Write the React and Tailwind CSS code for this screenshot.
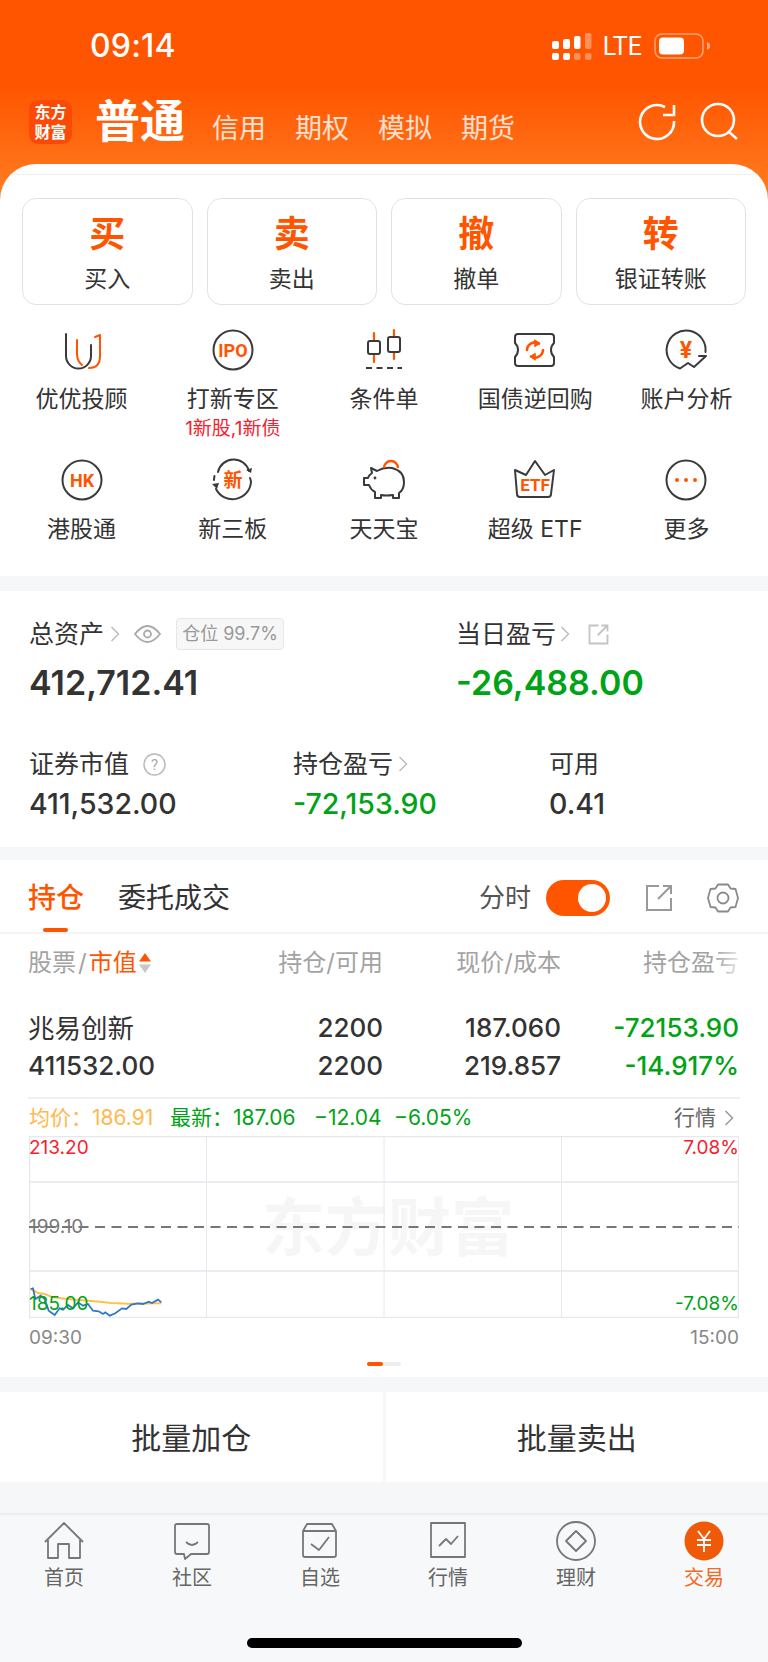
import React from 'react';

const ORANGE = '#ff5500';
const DARK = '#3a3a3a';

const trades = [
    { big: '买', small: '买入' },
    { big: '卖', small: '卖出' },
    { big: '撤', small: '撤单' },
    { big: '转', small: '银证转账' },
];

const IconBox = ({ children }) => (
    <svg width="44" height="44" viewBox="0 0 44 44" fill="none" strokeLinecap="round" strokeLinejoin="round">
        {children}
    </svg>
);

const OrangeText = ({ size = 16, y = 28, children }) => (
    <text x="22" y={y} textAnchor="middle" fill={ORANGE} fontSize={size} fontWeight="700" fontFamily="Roboto, 'Noto Sans CJK SC', sans-serif">
        {children}
    </text>
);

const menuIcons = {
    youyou: (
        <IconBox>
            <path d="M6 6V28a12.5 12.5 0 0 0 25 0V17" stroke={DARK} strokeWidth="2" />
            <path d="M17 12V26Q17 33 22 37" stroke={ORANGE} strokeWidth="2" />
            <path d="M29 40Q40 40 40 28V7L35 9" stroke={ORANGE} strokeWidth="2" />
        </IconBox>
    ),
    ipo: (
        <IconBox>
            <circle cx="22" cy="22" r="19.5" stroke={DARK} strokeWidth="2" />
            <OrangeText size={18} y={28.5}>IPO</OrangeText>
        </IconBox>
    ),
    candle: (
        <IconBox>
            <path d="M12 5V34M32 2V31" stroke={ORANGE} strokeWidth="2.2" />
            <rect x="6" y="13" width="12" height="13" rx="2" fill="#fff" stroke={DARK} strokeWidth="2" />
            <rect x="26" y="9" width="12" height="15" rx="2" fill="#fff" stroke={DARK} strokeWidth="2" />
            <path d="M4 40H40" stroke={DARK} strokeWidth="2" strokeDasharray="6 4.5" strokeLinecap="butt" />
        </IconBox>
    ),
    ticket: (
        <IconBox>
            <path d="M5 6H38Q41 6 41 9V15Q38 18 38 22Q38 26 41 29V35Q41 38 38 38H5Q2 38 2 35V29Q5 26 5 22Q5 18 2 15V9Q2 6 5 6Z" stroke={DARK} strokeWidth="2" />
            <path d="M14 22A8 8 0 0 1 26 15.500" stroke={ORANGE} strokeWidth="2.600" />
            <path d="M30 22A8 8 0 0 1 18 28.500" stroke={ORANGE} strokeWidth="2.600" />
            <path d="M22 12L27 15.500L22 18.500Z" fill={ORANGE} stroke={ORANGE} />
            <path d="M22 25.500L17 28.500L22 32Z" fill={ORANGE} stroke={ORANGE} />
        </IconBox>
    ),
    analysis: (
        <IconBox>
            <path d="M41.500 24A19.500 19.500 0 1 0 16 40.500L24 35L30 39L42 28H35" stroke={DARK} strokeWidth="2" />
            <OrangeText size={23} y={30}>¥</OrangeText>
        </IconBox>
    ),
    hk: (
        <IconBox>
            <circle cx="22" cy="22" r="19.500" stroke={DARK} strokeWidth="2" />
            <OrangeText size={18} y={28.500}>HK</OrangeText>
        </IconBox>
    ),
    xin: (
        <IconBox>
            <path d="M7 17A16 16 0 0 1 38 16" stroke={DARK} strokeWidth="2" transform="translate(0 -3)" />
            <path d="M39 20A18.500 18.500 0 0 1 40 24A18.500 18.500 0 0 1 5 31" stroke={DARK} strokeWidth="2" />
            <path d="M3 22A19 19 0 0 1 3.500 18" stroke={DARK} strokeWidth="2" />
            <path d="M35 12L40 15L41 10ZM1 26L6 31L8 25Z" fill={DARK} />
            <OrangeText size={19} y={29}>新</OrangeText>
        </IconBox>
    ),
    pig: (
        <IconBox>
            <path d="M9 10L15 13Q22 9 30 10Q42 13 42 24Q42 32 37 35V40H31V37Q24 38 19 37V40H13V34Q9 32 7 27H2V20H6Q7 17 10 15Z" stroke={DARK} strokeWidth="2" />
            <circle cx="13" cy="20" r="1.400" fill={DARK} />
            <path d="M22 10A7 7 0 0 1 36 10" stroke={ORANGE} strokeWidth="2.400" strokeLinecap="butt" />
        </IconBox>
    ),
    etf: (
        <IconBox>
            <path d="M2 12L4 36Q4 39 7 39H35Q38 39 38 36L41 12L32 17L22 3L13 17Z" stroke={DARK} strokeWidth="2" />
            <OrangeText size={17} y={33}>ETF</OrangeText>
        </IconBox>
    ),
    more: (
        <IconBox>
            <circle cx="22" cy="22" r="19.500" stroke={DARK} strokeWidth="2" />
            <circle cx="13" cy="22" r="2" fill={ORANGE} />
            <circle cx="22" cy="22" r="2" fill={ORANGE} />
            <circle cx="31" cy="22" r="2" fill={ORANGE} />
        </IconBox>
    ),
};

const menus = [
    { label: '优优投顾', icon: 'youyou' },
    { label: '打新专区', icon: 'ipo', sub: '1新股,1新债' },
    { label: '条件单', icon: 'candle' },
    { label: '国债逆回购', icon: 'ticket' },
    { label: '账户分析', icon: 'analysis' },
    { label: '港股通', icon: 'hk' },
    { label: '新三板', icon: 'xin' },
    { label: '天天宝', icon: 'pig' },
    { label: '超级 ETF', icon: 'etf' },
    { label: '更多', icon: 'more' },
];

const Chevron = ({ color = '#bdbdbd' }) => (
    <svg width="10" height="18" viewBox="0 0 10 18" fill="none">
        <path d="M1.500 2L8.500 9L1.500 16" stroke={color} strokeWidth="1.500" />
    </svg>
);

const ShareIcon = ({ size = 28, color = '#bbb', width = 2 }) => (
    <svg width={size} height={size} viewBox="0 0 28 28" fill="none">
        <path d="M14 2H2V26H26V14" stroke={color} strokeWidth={width} />
        <path d="M13 15L26 2M18 2H26V10" stroke={color} strokeWidth={width} />
    </svg>
);

const StatusBar = () => (
    <div className="h-[92px] pl-[90px] pr-[57px] flex items-center justify-between">
        <span className="text-[32px] font-medium text-white leading-none tracking-[0.2px]">09:14</span>
        <div className="flex items-center">
            <svg width="40" height="27" viewBox="0 0 40 27" fill="#fff">
                <rect x="0" y="8" width="7" height="8" rx="2" />
                <rect x="11" y="6" width="7" height="10" rx="2" />
                <rect x="22" y="3" width="6.500" height="13" rx="2" />
                <rect x="33" y="0" width="6.500" height="16" rx="2" opacity="0.35" />
                <rect x="0" y="20" width="7" height="7" rx="2" />
                <rect x="11" y="20" width="7" height="7" rx="2" />
                <rect x="22" y="20" width="6.500" height="7" rx="2" opacity="0.35" />
                <rect x="33" y="20" width="6.500" height="7" rx="2" opacity="0.35" />
            </svg>
            <span className="ml-[11px] text-[25px] text-white leading-none font-[family-name:Roboto,sans-serif]">LTE</span>
            <svg className="ml-[12px]" width="57" height="26" viewBox="0 0 57 26" fill="none">
                <rect x="1" y="1" width="48" height="24" rx="7" stroke="#fff" strokeOpacity="0.45" strokeWidth="1.600" />
                <rect x="5" y="4.500" width="25" height="17" rx="4" fill="#fff" />
                <path d="M53 9L56 11V15L53 17Z" fill="#fff" fillOpacity="0.5" />
            </svg>
        </div>
    </div>
);

const TopNav = () => (
    <div className="h-[60px] pl-[29px] pr-[28px] flex items-center">
        <div className="w-[43px] h-[44px] rounded-[9px] bg-[#fb4a05] text-white text-[16px] font-bold leading-[20px] text-center">
            <div className="pt-[2px]">东方</div>
            <div>财富</div>
        </div>
        <span className="ml-[23px] text-[45px] font-bold text-white leading-[60px]">普通</span>
        <div className="ml-[27px] flex gap-[29px] pt-[14px] text-[27px] text-white/80 leading-[40px]">
            <span>信用</span>
            <span>期权</span>
            <span>模拟</span>
            <span>期货</span>
        </div>
        <div className="ml-auto flex items-center gap-[22px]">
            <svg width="40" height="40" viewBox="0 0 40 40" fill="none" stroke="#fff" strokeWidth="2.600">
                <path d="M27 5A17 17 0 1 0 36 19" />
                <path d="M36 3V13H25" />
            </svg>
            <svg width="40" height="40" viewBox="0 0 40 40" fill="none" stroke="#fff" strokeWidth="2.600">
                <circle cx="18" cy="18" r="16" />
                <path d="M29 30L37 37" />
            </svg>
        </div>
    </div>
);

const TradePanel = () => (
    <div className="relative -mt-[41px] bg-white rounded-t-[36px] overflow-hidden">
        <div className="h-[11px] border-b border-[#f0f0f0]" />
        <div className="pt-[23px] pl-[22px] pr-[22px] grid grid-cols-4 gap-x-[14px]">
            {trades.map((t) => (
                <div key={t.big} className="h-[107px] rounded-[14px] border border-[#e2e2e2] flex flex-col items-center">
                    <span className="mt-[14px] text-[36px] font-bold text-[#ff5500] leading-[42px]">{t.big}</span>
                    <span className="mt-[8px] text-[23px] text-[#333] leading-[32px]">{t.small}</span>
                </div>
            ))}
        </div>
        <div className="mt-[22px] px-[6px] grid grid-cols-5 h-[249px] grid-rows-[130px_119px]">
            {menus.map((m) => (
                <div key={m.label} className="pt-[1px] flex flex-col items-center">
                    {menuIcons[m.icon]}
                    <span className="mt-[12px] text-[23px] text-[#333] leading-[30px] whitespace-nowrap">{m.label}</span>
                    {m.sub && <span className="mt-[3px] text-[19px] text-[#f5222d] leading-[24px] whitespace-nowrap">{m.sub}</span>}
                </div>
            ))}
        </div>
    </div>
);

const Assets = () => (
    <div className="mt-[15px] h-[256px] bg-white pl-[29px] pr-[30px] pt-[26px]">
        <div className="flex h-[34px] items-center">
            <div className="w-[427px] flex items-center">
                <span className="text-[25px] text-[#333] leading-[34px]">总资产</span>
                <span className="ml-[6px]"><Chevron /></span>
                <svg className="ml-[14px]" width="27" height="20" viewBox="0 0 27 20" fill="none" stroke="#aaa" strokeWidth="1.800">
                    <path d="M1 10Q13.500 -6 26 10Q13.500 26 1 10Z" />
                    <circle cx="13.500" cy="10" r="3.500" />
                </svg>
                <span className="ml-[15px] h-[32px] w-[108px] rounded-[4px] border border-[#e6e6e6] bg-[#f7f7f7] text-[18px] text-[#999] leading-[30px] text-center whitespace-nowrap">仓位 99.7%</span>
            </div>
            <span className="text-[25px] text-[#333] leading-[34px]">当日盈亏</span>
            <span className="ml-[4px]"><Chevron /></span>
            <span className="ml-[18px]"><ShareIcon size={21} color="#c4c4c4" width={2.400} /></span>
        </div>
        <div className="mt-[12px] flex h-[40px] items-center text-[34px] font-semibold leading-[40px]">
            <span className="w-[427px] text-[#333]">412,712.41</span>
            <span className="text-[#00a316]">-26,488.00</span>
        </div>
        <div className="mt-[44px] flex h-[34px] items-center text-[25px] text-[#333] leading-[34px]">
            <div className="w-[264px] flex items-center">
                <span>证券市值</span>
                <svg className="ml-[14px]" width="23" height="23" viewBox="0 0 23 23" fill="none">
                    <circle cx="11.500" cy="11.500" r="10.500" stroke="#bbb" strokeWidth="1.500" />
                    <text x="11.500" y="17" textAnchor="middle" fontSize="15" fill="#aaa" fontFamily="Roboto, sans-serif">?</text>
                </svg>
            </div>
            <div className="w-[256px] flex items-center">
                <span>持仓盈亏</span>
                <span className="ml-[5px]"><Chevron /></span>
            </div>
            <span>可用</span>
        </div>
        <div className="mt-[6px] flex h-[34px] items-center text-[28.500px] font-medium leading-[34px]">
            <span className="w-[264px] text-[#333]">411,532.00</span>
            <span className="w-[256px] text-[#00a316]">-72,153.90</span>
            <span className="text-[#333]">0.41</span>
        </div>
    </div>
);

const Tabs = () => (
    <div className="h-[74px] relative pl-[28px] pr-[29px] pt-[4px] flex items-center border-b-2 border-[#f4f4f4]">
        <span className="text-[28px] font-medium text-[#ff5500] leading-[40px]">持仓</span>
        <span className="ml-[34px] text-[28px] text-[#333] leading-[40px]">委托成交</span>
        <span className="absolute left-[43px] bottom-0 w-[25px] h-[4px] rounded-[2px] bg-[#ff5500]" />
        <span className="ml-auto text-[26px] text-[#555] leading-[40px]">分时</span>
        <span className="ml-[15px] w-[64px] h-[36px] rounded-full bg-[#ff5500] flex items-center justify-end pr-[4px]">
            <span className="w-[28px] h-[28px] rounded-full bg-white" />
        </span>
        <span className="ml-[35px]"><ShareIcon size={28} color="#999" /></span>
        <svg className="ml-[34px]" width="32" height="32" viewBox="0 0 32 32" fill="none" stroke="#8a8a8a" strokeWidth="1.800" strokeLinejoin="round">
            <path d="M11 2.500H21L23.500 6.500L28.500 7L31 16L28.500 25L23.500 25.500L21 29.500H11L8.500 25.500L3.500 25L1 16L3.500 7L8.500 6.500Z" />
            <circle cx="16" cy="16" r="5.500" />
        </svg>
    </div>
);

const tableRows = [
    ['兆易创新', '2200', '187.060', '-72153.90'],
    ['411532.00', '2200', '219.857', '-14.917%'],
];

const Holdings = () => (
    <div className="px-[28px]">
        <div className="relative grid grid-cols-[178px_177px_178px_178px] h-[58px] items-center text-[24px] text-[#a3a3a3] leading-[32px]">
            <div className="flex items-center">
                <span>股票</span>
                <span className="mx-[2px]">/</span>
                <span className="text-[#ff5500]">市值</span>
                <svg className="ml-[1px]" width="14" height="22" viewBox="0 0 14 22">
                    <path d="M7 1L13 9.500H1Z" fill="#ff5500" />
                    <path d="M7 21L13 12.500H1Z" fill="#c8c8c8" />
                </svg>
            </div>
            <span className="text-right">持仓/可用</span>
            <span className="text-right">现价/成本</span>
            <span className="text-right">持仓盈亏</span>
            <span className="absolute right-[-1px] top-0 bottom-0 w-[26px] bg-gradient-to-r from-white/0 to-white/80" />
        </div>
        <div className="mt-[17px] grid grid-cols-[178px_177px_178px_178px] grid-rows-[38px_38px] items-center text-[26px] font-medium text-[#333] leading-[38px]">
            {tableRows.map((row) =>
                row.map((cell, i) => (
                    <span key={cell + i} className={i === 0 ? (cell === '兆易创新' ? 'text-[26.500px] font-normal whitespace-nowrap' : 'whitespace-nowrap') : i === 3 ? 'text-right text-[#00a316]' : 'text-right'}>
                        {cell}
                    </span>
                )),
            )}
        </div>
        <div className="mt-[12px] h-[2px] bg-[#f0f0f0]" />
    </div>
);

const blueLine = [[8,60],[15,58],[22,90],[38,80],[50,90],[62,125],[80,138],[95,118],[105,122],[120,108],[135,118],[150,100],[165,110],[180,105],[195,125],[212,127],[225,135],[232,130],[245,140],[262,133],[282,118],[295,120],[310,107],[330,103],[345,105],[362,98],[372,102],[390,92],[400,100]];
const avgLine = [[8,60],[30,72],[50,75],[75,85],[100,88],[150,93],[200,97],[250,102],[300,104],[400,103]];
const toPoints = (pts) => pts.map(([x, y]) => `${x / 3 - 1},${y / 3 + 133}`).join(' ');

const Chart = () => (
    <div className="mx-[29px] relative w-[710px] h-[182px]">
        <span className="absolute left-[233px] top-[56px] text-[63px] font-bold leading-[70px] text-[#f6f6f6] whitespace-nowrap">东方财富</span>
        <svg width="710" height="182" viewBox="0 0 710 182" fill="none" className="block relative">
            <rect x="0.500" y="0.500" width="709" height="181" stroke="#e6e8ee" strokeWidth="1.500" />
            <path d="M0 46H710M0 135H710" stroke="#e6e8ee" strokeWidth="1.500" />
            <path d="M177.500 0V182M355 0V182M532.500 0V182" stroke="#e6e8ee" strokeWidth="1" />
            <path d="M0 91H710" stroke="#777" strokeWidth="1.800" strokeDasharray="10 6.500" />
            <polyline points={toPoints(avgLine)} stroke="#ffc04d" strokeWidth="2" />
            <polyline points={toPoints(blueLine)} stroke="#2f78c8" strokeWidth="1.800" />
        </svg>
        <span className="absolute left-0 top-0 text-[19px] leading-[24px] text-[#f5222d]">213.20</span>
        <span className="absolute right-0 top-0 text-[19px] leading-[24px] text-[#f5222d]">7.08%</span>
        <span className="absolute left-0 top-[79px] text-[19px] leading-[24px] text-[#777]">199.10</span>
        <span className="absolute left-0 top-[156px] text-[19px] leading-[24px] text-[#00a316]">185.00</span>
        <span className="absolute right-0 top-[156px] text-[19px] leading-[24px] text-[#00a316]">-7.08%</span>
    </div>
);

const tabItems = [
    {
        label: '首页',
        icon: <path d="M1 21L20 2L39 21M4 19V37H14V23H25V37H36V19" />,
    },
    {
        label: '社区',
        icon: <path d="M5 3H35Q37 3 37 5V31Q37 33 35 33H19L13 38L12 33H5Q3 33 3 31V5Q3 3 5 3ZM14 21Q20 27 26 21" />,
    },
    {
        label: '自选',
        icon: <path d="M3 10V34Q3 36 5 36H34Q36 36 36 34V10ZM3 10L7 3H32L36 10M11 23L19 29L29 16" />,
    },
    {
        label: '行情',
        icon: <path d="M3 2H37V36H3ZM11 25L18 18L23 23L30 15" />,
    },
    {
        label: '理财',
        icon: (
            <>
                <circle cx="20" cy="20" r="19" />
                <path d="M20 10L30 20L20 30L10 20Z" />
            </>
        ),
    },
];

const BottomTabs = () => (
    <div className="absolute left-0 right-0 bottom-0 h-[149px] bg-[#f7f8fa] border-t-2 border-[#eeeeee]">
        <div className="grid grid-cols-6 pt-[6px]">
            {tabItems.map((t) => (
                <div key={t.label} className="flex flex-col items-center">
                    <svg width="40" height="40" viewBox="0 0 40 40" fill="none" stroke="#777" strokeWidth="1.800" strokeLinejoin="round">
                        {t.icon}
                    </svg>
                    <span className="mt-[3px] text-[20px] text-[#666] leading-[28px]">{t.label}</span>
                </div>
            ))}
            <div className="flex flex-col items-center">
                <svg width="40" height="40" viewBox="0 0 40 40" fill="none">
                    <circle cx="20" cy="20" r="19.500" fill="#ee5a08" />
                    <path d="M14 10L20 18L26 10M20 18V31M13 19H27M13 24H27" stroke="#fff" strokeWidth="1.800" />
                </svg>
                <span className="mt-[3px] text-[20px] text-[#f26a1b] leading-[28px]">交易</span>
            </div>
        </div>
        <span className="absolute left-[247px] bottom-[14px] w-[275px] h-[10px] rounded-full bg-black" />
    </div>
);

export default function App() {
    return (
        <div className="relative w-[768px] h-[1662px] overflow-hidden bg-[#f6f7f9] font-[family-name:Inter,'Noto_Sans_CJK_SC',sans-serif]">
            <div className="h-[205px] bg-[linear-gradient(180deg,#ff5500_0%,#ff5500_42%,#ff8024_100%)]">
                <StatusBar />
                <TopNav />
            </div>
            <TradePanel />
            <Assets />
            <div className="mt-[13px] h-[517px] bg-white">
                <Tabs />
                <Holdings />
                <div className="h-[37px] pl-[29px] pr-[34px] flex items-center text-[21px] leading-[28px] whitespace-nowrap">
                    <span className="w-[141px] text-[#ffb84d]">均价：186.91</span>
                    <span className="w-[144px] text-[#00a316]">最新：187.06</span>
                    <span className="w-[80px] text-[#00a316]">−12.04</span>
                    <span className="text-[#00a316]">−6.05%</span>
                    <span className="ml-auto text-[#666]">行情</span>
                    <span className="ml-[8px]"><Chevron color="#999" /></span>
                </div>
                <Chart />
                <div className="mt-[8px] px-[29px] h-[24px] flex items-center justify-between text-[19px] text-[#888] leading-[24px]">
                    <span>09:30</span>
                    <span>15:00</span>
                </div>
                <div className="mt-[12px] mx-auto w-[34px] h-[4px] rounded-full bg-[#eeeeee]">
                    <div className="w-[16px] h-[4px] rounded-full bg-[#ff5500]" />
                </div>
            </div>
            <div className="mt-[15px] h-[90px] flex bg-white">
                <div className="flex-1 flex items-center justify-center text-[30px] text-[#333] pt-[2px]">批量加仓</div>
                <div className="w-[3px] bg-[#f6f7f9]" />
                <div className="flex-1 flex items-center justify-center text-[30px] text-[#333] pt-[2px]">批量卖出</div>
            </div>
            <BottomTabs />
        </div>
    );
}
